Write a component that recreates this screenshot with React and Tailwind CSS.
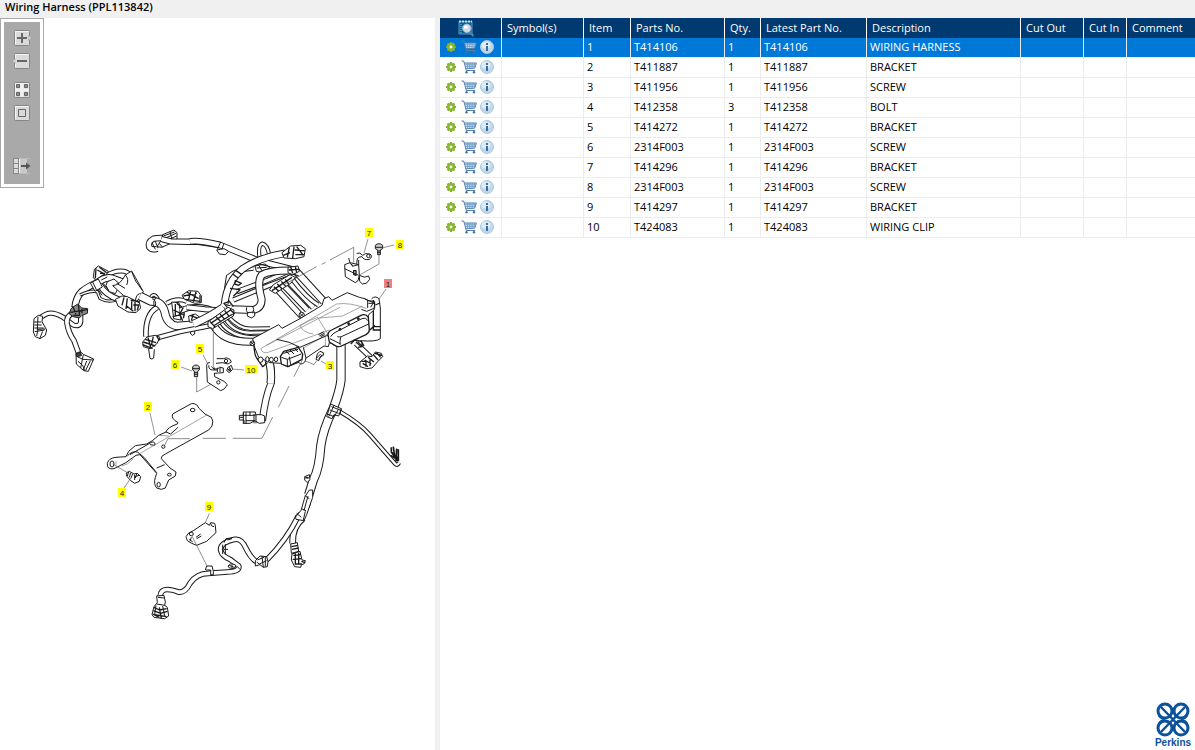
// src/pages/parts/App.jsx
import React, { useState } from 'react';

const title = 'Wiring Harness (PPL113842)';

const parts = [
  { item: 1, no: 'T414106', qty: 1, desc: 'WIRING HARNESS' },
  { item: 2, no: 'T411887', qty: 1, desc: 'BRACKET' },
  { item: 3, no: 'T411956', qty: 1, desc: 'SCREW' },
  { item: 4, no: 'T412358', qty: 3, desc: 'BOLT' },
  { item: 5, no: 'T414272', qty: 1, desc: 'BRACKET' },
  { item: 6, no: '2314F003', qty: 1, desc: 'SCREW' },
  { item: 7, no: 'T414296', qty: 1, desc: 'BRACKET' },
  { item: 8, no: '2314F003', qty: 1, desc: 'SCREW' },
  { item: 9, no: 'T414297', qty: 1, desc: 'BRACKET' },
  { item: 10, no: 'T424083', qty: 1, desc: 'WIRING CLIP' }
];

const callouts = [
  { n: 7, x: 369, y: 233 },
  { n: 8, x: 400, y: 245 },
  { n: 1, x: 388, y: 284 },
  { n: 5, x: 200, y: 349 },
  { n: 6, x: 175, y: 365 },
  { n: 10, x: 251, y: 370 },
  { n: 3, x: 330, y: 366 },
  { n: 2, x: 148, y: 407 },
  { n: 4, x: 122, y: 493 },
  { n: 9, x: 209, y: 507 }
];

const GearIcon = () => (
  <svg width="10" height="10" viewBox="0 0 10 10">
    <g stroke="#7fae27" strokeWidth="2">
      <path d="M5 0v10M0 5h10M1.500 1.500l7 7M8.500 1.500l-7 7" />
    </g>
    <circle cx="5" cy="5" r="2.700" fill="#fff" stroke="#86b72c" strokeWidth="2.600" />
  </svg>
);

const CartIcon = () => (
  <svg width="16" height="14" viewBox="0 0 16 14" fill="none">
    <path d="M4 3h11l-1.400 5H5.200z" fill="#cfe0f1" />
    <path d="M.5 1h2.200l2.600 9.500h8.900M3.400 3h12l-1.700 5.200-8.800.6" stroke="#527fae" />
    <path d="M6.500 3v5.500M8.800 3v5.300M11.100 3v5.200M13.300 3v5M4 4.700h10.800M4.600 6.500h9.600" stroke="#6f9cc8" strokeWidth=".8" />
    <circle cx="5.500" cy="12.300" r="1.200" fill="#44729f" />
    <circle cx="13" cy="12.300" r="1.200" fill="#44729f" />
  </svg>
);

const InfoIcon = () => (
  <svg width="14" height="14" viewBox="0 0 14 14">
    <circle cx="7" cy="7" r="6.500" fill="#c0d8ea" stroke="#a9c8df" />
    <ellipse cx="6" cy="5" rx="4.500" ry="3.600" fill="#deecf6" />
    <path d="M6 3h2v2H6zM6 6h2v5H6z" fill="#3f6c9b" />
  </svg>
);

const SearchIcon = () => (
  <svg width="17" height="17" viewBox="0 0 17 17" fill="none">
    <path d="M1 1.500h13V14H1z" fill="#0b5d93" stroke="#4f9fcf" />
    <path d="M1 1.500h13" stroke="#b9dff3" strokeWidth="2" strokeDasharray="2 1" />
    <path d="M3 4v9" stroke="#8fc4e4" strokeDasharray="1 1" />
    <path d="M11.500 12l4 4" stroke="#4389b8" strokeWidth="2.200" />
    <circle cx="8.800" cy="8.300" r="4.200" fill="#d3dde5" stroke="#a3b8c8" />
    <ellipse cx="7.800" cy="7" rx="2" ry="1.600" fill="#fff" />
  </svg>
);

const ToolButton = ({ label, className = '', children }) => (
  <button aria-label={label} className={`block h-4 w-5 ${className}`}>
    <svg width="20" height="16" viewBox="0 0 20 16" fill="none">
      {children}
    </svg>
  </button>
);

const Plate = () => (
  <>
    <rect x="2.500" y=".5" width="15" height="15" rx="1" fill="#dadada" stroke="#858585" />
    <path d="M3.500 14V1.500h13" stroke="#f4f4f4" />
  </>
);

const Toolbar = () => (
  <div className="w-11 border border-[#a9a9a9] p-[3px]">
    <div className="flex h-[162px] flex-col items-center bg-[#a9a9a9] pt-2">
      <ToolButton label="Zoom in">
        <Plate />
        <path d="M17 5.500l2.500 2.500-2.500 2.500z" fill="#eee" stroke="#858585" strokeWidth=".6" />
        <path d="M10 3v10M5 8h10" stroke="#666" strokeWidth="2" />
      </ToolButton>
      <ToolButton label="Zoom out" className="mt-[7px]">
        <Plate />
        <path d="M3 5.500L.5 8 3 10.500z" fill="#eee" stroke="#858585" strokeWidth=".6" />
        <path d="M5 8h10" stroke="#666" strokeWidth="2" />
      </ToolButton>
      <ToolButton label="Fit all" className="mt-[13px]">
        <Plate />
        <path d="M10 1v14M3 8h14" stroke="#f0f0f0" strokeWidth="3" />
        <path d="M4.500 2.500h3v3h-3zM12.500 2.500h3v3h-3zM4.500 10.500h3v3h-3zM12.500 10.500h3v3h-3z" fill="#8a8a8a" stroke="#666" />
      </ToolButton>
      <ToolButton label="Actual size" className="mt-[7px]">
        <Plate />
        <path d="M6.500 4.500h7v7h-7z" stroke="#666" />
      </ToolButton>
      <ToolButton label="Toggle list" className="mt-[37px]">
        <path d="M1.500.5h5v15h-5z" fill="#ddd" stroke="#858585" />
        <path d="M1 5.500h5M1 10.500h5" stroke="#858585" />
        <path d="M7 .5h8v15H7z" fill="#c9c9c9" />
        <path d="M7 .5h11M7 15.500h11" stroke="#bdbdbd" />
        <path d="M7.500 1v14" stroke="#f4f4f4" />
        <path d="M9 8h6" stroke="#555" strokeWidth="2" />
        <path d="M14 4.500L18.500 8 14 11.500z" fill="#555" />
      </ToolButton>
    </div>
  </div>
);

// a hose is a dark stroke with a thinner white one on top
const Tube = ({ d, w = 18 }) => (
  <>
    <path d={d} fill="none" stroke="#1a1a1a" strokeWidth={w + 3} />
    <path d={d} fill="none" stroke="#fff" strokeWidth={w - 3} />
  </>
);

// surface lines drawn over a part, never filled
const Lines = ({ d, w = 4 }) => <path d={d} fill="none" strokeWidth={w} />;

const LeftBranch = () => (
  <g transform="translate(20 220) scale(.33333)">
    <Tube d="M182 285L182 305Q180 322 160 315L130 292Q95 272 75 284L62 292" w={13} />
    <Tube d="M160 278Q138 288 141 310Q146 340 162 362L176 400" w={14} />
    <path d="M42 296L55 286 68 289 66 305 80 330 76 346 60 356 46 350 40 336z" />
    <Lines w={3} d="M42 306h22M43 315h22M43 324h28M44 335l30-5M50 348l4-20 22-1M60 354l8-20M54 290l-2 40" />
    <path d="M168 400l13-5 9 8 31 14-16 37-14-2-22-20z" />
    <Lines w={3} d="M172 410l16 8 32 2M190 450l10-27M197 451l14-29M174 424l14 12 6 16M190 404l-8 40" />
    <path d="M168 401l14-4 2 10-14 3z" fill="#444" />

    <Tube d="M165 262Q168 232 185 215Q205 198 235 187" w={19} />
    <Tube w={7} d="M180 225Q212 210 232 215L240 235Q265 250 292 238" />
    <path d="M153 266l20-14 12 12 18 2-1 14-16 6-8 8-18-4-12-8z" fill="#888" />
    <Lines d="M158 258l10 25M175 254l4 32M152 277l50-8M186 266v14M160 286h20" />
    <Tube d="M262 166Q285 150 312 154Q325 156 330 168" w={12} />
    <path d="M220 172l3-24 12-10 30 16-10 16-26 14z" />
    <Lines d="M228 145l-2 30M238 142l22 16M232 150l22 12-20 15M240 160h15" />
    <Tube d="M230 190Q260 165 285 178L318 190" w={20} />
    <Tube d="M240 195Q255 225 300 240" w={16} />
    <path d="M262 185l20-8 18 16-14 28-18 -6-10-18z" />
    <path d="M211 189l24-12 12 24-22 13z" />
    <Lines w={3} d="M244 180l18-9M234 208l12 18M250 190l16 22M218 186l12 25" />
    <path d="M278 197Q300 196 316 165L335 153 346 172 370 215 350 246 310 226z" />
    <Lines w={3} d="M335 155l12 28 20 28M316 165q12 12 4 30M366 222q-16-6-20 20M290 190l25 15" />
    <path d="M286 238l20-10 16 2 36 18 4 16-14 14-24-2-30-18z" />
    <Lines d="M312 232l-6 24M322 235l-4 32M332 240l28 6M335 244v26M345 246v28M320 258l20 16M340 255h16l-4 16" />

    <Tube d="M388 240Q400 210 415 238" w={8} />
    <Tube d="M412 262Q375 282 378 350" w={14} />
    <Tube d="M360 228L392 244Q425 242 434 275Q440 312 470 318L575 310" w={23} />
    <Lines w={3} d="M396 236q14 4 10 22M408 232q-10 10-6 26" />
    <Tube d="M440 250Q470 232 500 244" w={12} />
    <path d="M455 246l22 2 6 52-22-4z" />
    <Lines d="M470 250q30 15 20 45M460 270l30 14M480 284l8 18M458 290l26-6M466 252v36" />
    <path d="M486 226l20-14 28 2 10 14v20l-20 2-30-12z" />
    <Lines d="M490 228l40-8M500 216l36 20M496 238l44 6M512 214l-6 24M528 216l-8 30M540 226v22" />
    <path d="M506 288l20-6 14 10-10 16-22-2z" />
    <path d="M512 330v12q5 8 12 0v-14" />
    <Tube d="M480 272Q520 255 560 265L600 280" w={16} />
    <Lines d="M510 286l28 10M520 282l-6 20M490 262l-14 26" />
    <Tube d="M405 355L480 335 575 316" w={13} />
    <path d="M368 366l14-16 24-4 14 6-10 20-20 14-20-6z" />
    <Lines d="M370 366l36 12M376 358l32 10M384 352l8 30M400 350l-6 26M368 374l30 12" />
    <path d="M386 387l4 28q6 5 11-1l2-26" />
    <Lines d="M410 348l8 14" />
    <Tube d="M463 64L458 56Q420 52 400 56Q382 66 388 82Q396 92 412 86" w={16} />
    <path d="M424 60l4-16 34-14 9 8v20l-14 10-32 14-14-2z" />
    <Lines w={3} d="M430 48l34-12M432 56l36-16M434 64l36-16M396 68l10 20M406 64l8 20M418 70l10 12M450 34l8 34" />
    <Tube d="M600 75L530 65Q490 66 452 64L424 57" w={16} />
  </g>
);

const CentreHarness = () => (
  <g transform="translate(200 220) scale(.33333)">
    <Tube d="M-30 64Q0 60 60 75Q110 95 180 124L275 148" w={17} />
    <Lines w={3} d="M62 66l-10 22M72 70l-8 22" />
    <path d="M50 90l8 12 18 2 10-10-14-8z" />
    <Tube d="M180 120Q172 76 187 71Q205 74 210 120" w={10} />
    <Lines w={3} d="M165 138l30-6 14 10-20 16-20-4zM170 144l30-2M176 136l10 16" />
    <Tube d="M90 250Q70 255 85 170Q105 150 160 145" w={12} />
    <Tube d="M110 215L200 182 270 152" w={13} />
    <Tube d="M100 240L210 195 290 165" w={13} />
    <Tube d="M255 100Q180 112 130 145Q80 185 74 252" w={20} />
    <Lines d="M108 152l18 12M98 162l16 12M106 182l18 8-8 6-12-4zM90 205l30 4-20 20" />
    <path d="M246 98l26-20 30-2 14 10-4 24-26 6-34-2z" />
    <Lines d="M268 82l-6 30M282 80l-4 34M284 90l30 2M286 104h26M290 80l20 26M250 106l20-8" />

    <Tube d="M228 205L306 290" w={16} />
    <Tube d="M245 190L322 270" w={16} />
    <Tube d="M262 180L340 262" w={16} />
    <Tube d="M275 175Q320 235 355 255" w={12} />
    <Tube d="M285 150L372 245" w={21} />
    <path d="M208 210l12-16 50-30 16 8-14 18-46 30z" />
    <Lines d="M216 212l60-40M222 200l14 14M232 192l14 14M244 184l14 16M256 178l10 14" />
    <Tube d="M285 152Q210 150 185 165Q170 185 185 238Q185 265 160 270L95 268" w={21} />
    <path d="M264 142l30-4 4 16-20 10-14-6z" />
    <Lines d="M266 150l30-2M272 140l6 20M280 162l16 6M286 140l4 18" />
    <circle cx="305" cy="285" r="8" />
    <Lines w={3} d="M300 280l10 10M310 280l-10 10" />
    <path d="M142 278v10l12 6 10-6v-12z" />
    <Lines w={3} d="M140 262q-4 10 4 18M158 258q6 10 0 22" />

    <Tube d="M-40 262L15 268 75 272" w={15} />
    <Tube d="M-20 312Q30 290 70 262" w={22} />
    <Tube d="M85 290Q120 330 160 326L210 325" w={10} />
    <Tube d="M75 296Q105 342 160 338L200 337" w={10} />
    <Tube d="M62 305Q95 358 185 352" w={11} />
    <Tube d="M40 315Q70 370 165 365" w={21} />
    <path d="M24 306l60-44 18 8-2 18-62 38-14-6z" />
    <Lines d="M32 310l60-40M40 318l58-36M48 290l16 16M60 282l14 16M74 272l14 18M30 304l16 18M82 262l-10 -12 16-6 12 16M90 268l14 14" />

    {/* control unit */}
    <Tube d="M206 420Q216 450 212 490" w={22} />
    <path d="M515 236q10-10 22 0l4 28v92q-12 10-60 6" />
    <Lines d="M520 240v90M526 255l14-6M518 320h24M518 330h24M510 330l14-14" />
    <path d="M158 356L236 314 246 325 300 296 366 256 372 236 386 230 396 241 442 218 478 232 494 236 524 250 522 270 505 285 506 330 424 378 388 368 385 380 372 378 302 425 262 440 242 430 210 428 176 412 164 382z" />
    <g fill="none" stroke="#777" strokeWidth="2">
      <path d="M182 386L410 252Q450 246 500 266M182 386q4 14 20 12l186-68M298 318q30-18 55-26L385 345M300 318q10 20 40 24M358 294l70-6 60-30M376 352v28M310 384l76-44M200 376L420 262" />
    </g>
    <Lines w={3} d="M230 358q40 6 70 24L385 345M494 236l10 6 20 2v20l-24 10-16-6M505 250h20M503 240v24M512 262l8-14" />
    <path d="M385 350q-4-14 10-20l88-44q14-6 22 6l3 38q0 8-10 14l-74 34q-10 5-20-2l-16-10z" strokeWidth="4" />
    <Lines w={3} d="M392 350q6-10 16-14l78-40q14-4 16 6M390 356l32 16M424 350q-4 2-4 24M424 350l82-38M412 350q6 2 12 0" />
    <circle cx="420" cy="328" r="3" fill="#222" />
    <circle cx="446" cy="311" r="3" fill="#222" />
    <circle cx="475" cy="296" r="3" fill="#222" />
    <Lines w={3} d="M355 344l16-9M358 348l16-9M362 350l12-6M290 378l8 12" />
    <path d="M310 382l8 32q-2 18-16 18l-10-8" />
    <path d="M241 410l10-16 44-12 13 20-2 16-42 22-20-8z" strokeWidth="4" />
    <Lines w={3} d="M244 412l18 6 42-16M262 418v20M250 400l44-12M258 392l10 12M270 390l12 12M284 386l10 10M268 410l4 24" />
    <Lines d="M162 378q2 30 8 36l18 26 14-12" />
    <circle cx="157" cy="370" r="7" />
    <Lines w={3} d="M152 366l10 8M162 366l-10 8" />
    <ellipse cx="182" cy="419" rx="7" ry="8" />
    <ellipse cx="202" cy="418" rx="5" ry="8" />
    <ellipse cx="214" cy="419" rx="6" ry="7" />
    <ellipse cx="228" cy="418" rx="5" ry="7" />
    <Tube d="M468 370L512 412" w={14} />
    <Lines d="M452 372l12-12 20 4 8 14M468 366l16 14M486 368v12l-12 2" />
    <path d="M480 426l22-18 14 2 10-14 18 4 4 10-14 14-18 20-16 2-20-6z" />
    <Lines d="M488 430l16 10M494 420l20 12M504 412l18 14M520 404l14 16M530 398l12 14M484 424h14v16M510 414v24M524 400l22 6" />

    {/* upper bracket and screws */}
    <path d="M434 134l16-6 26 6 2 32-4 16-8 6-30-18z" />
    <Lines w={3} d="M450 128l-4-14M476 134v-14M434 146l42 20M450 130l10 8 16-4M454 132l4 8" />
    <Lines d="M461 152h7v14l-7-3z" />
    <path d="M470 100q10-4 18 6 6-8 22-4 10 8-2 16-16 4-22-8-10 0-14 6l-2 16" />
    <circle cx="505" cy="108" r="5" />
    <path d="M478 166q16 10 28 2l3 10q-8 16-22 14l-8-8z" />
    <path d="M526 76q10-10 22 0v10l-7 4v14h-8V90l-7-4z" fill="#ccc" />
    <Lines w={3} d="M526 82h22M533 93h8M533 98h8" />
    <g fill="none" stroke="#555" strokeWidth="2">
      <path d="M461 128V82L390 120M377 127l-12 6M350 140L255 192M537 104v28l-60 34" />
      <path d="M350 422l-8 12-28-12" />
    </g>
    <path d="M352 402l8-8 10 4v8l-8 4-6 12-8-4z" />
    <Lines w={3} d="M350 414l12-12M356 418l10-14" />
  </g>
);

const Brackets = () => (
  <g transform="translate(90 340) scale(.33333)">
    {/* small bracket with clip */}
    <path d="M370 -40V84M320 112v44l44-24" fill="none" stroke="#555" strokeWidth="2" />
    <path d="M350 76q0-10 10-8M350 76l2 50 40 26q12-2 20-18l-10-10-28-14-2-28" />
    <path d="M356 76q0 14 12 14h12l8-8 12 2v14l-28 2" />
    <Lines w={3} d="M364 80q10 12 20 4M382 84v12M390 84v12" />
    <path d="M380 56h20q8-6 20 2l4 8-10 6-16-4-20 2" />
    <circle cx="385" cy="127" r="5" />
    <circle cx="408" cy="63" r="5" />
    <path d="M414 82l10-6 4 12-10 10-8-6z" />
    <Lines d="M418 82l4 8M414 88l8 6" />
    <path d="M308 80q10-10 20 0v10l-5 4v16h-10V94l-5-4z" fill="#ccc" />
    <Lines w={3} d="M308 86h20M313 98h10M313 103h10" />

    {/* long bracket */}
    <path d="M72 386Q50 390 52 370Q56 354 78 352L108 350 116 334 136 317 170 312Q185 306 206 286L228 276Q232 262 262 252L264 248Q242 236 248 222L304 191Q312 188 322 196L326 204 345 222 364 232Q372 242 366 258L356 270 226 342Q212 348 214 356L240 384 258 396 256 408 236 420 226 444Q216 452 200 444Q190 432 196 412L200 400 150 344 138 346Q110 370 72 386z" />
    <Lines w={3} d="M112 348q14-16 30-12l20 16 38 46M120 344l66-38M228 276l14 6 22-20M186 306q12 0 8 10l-14-2M200 384l24-10" />
    <path d="M142 345L352 224M78 364v12M206 286l30 2M95 378q18-2 35-22" fill="none" stroke="#777" strokeWidth="2" />
    <ellipse cx="308" cy="210" rx="7" ry="5" />
    <ellipse cx="66" cy="372" rx="6" ry="9" />
    <ellipse cx="238" cy="404" rx="6" ry="4" />
    <ellipse cx="206" cy="434" rx="5" ry="7" />
    <circle cx="220" cy="320" r="5" />
    <path d="M110 398l8-4 14 8 10-2 10 10-4 14-14 6-12-8-12-14z" />
    <Lines w={3} d="M116 396l-4 12M122 398l-4 14M128 402l-6 14M134 404v16M134 410l14-4M140 402l-4 12" />
    <g fill="none" stroke="#555" strokeWidth="2">
      <path d="M68 372l44 26M102 444l18-26M222 320l12-24H300M338 295h70M442 295h-14M354 295h0M442 295h74l32-64M565 202l32-64M612 110l25-50" />
    </g>
  </g>
);

const LowerHarness = () => (
  <g transform="translate(230 360) scale(.33333)">
    <Tube d="M110 -14Q128 10 123 70Q106 110 97 182" w={19} />
    <path d="M28 166h12v-10h36v8h18l10 4v20l-16 2-14-8-14 8H42v-10H28z" />
    <Lines w={3} d="M40 158v34M48 158v34M72 162v28M78 164v26M40 166h36M48 182h26M28 172h14M60 156v10" />
    <Tube d="M328 154Q390 190 420 225L496 312Q502 318 507 308" w={10} />
    <path d="M482 262l12-4 8 8 5 0v54l-12 0-8-16z" stroke="none" fill="none" />
    <Lines w={5} d="M484 262v14l20 28M490 260l4 30M482 286l22 14M500 266l-2 38M505 268v36M486 278l18 16" />
    <Tube d="M333 -50V60Q330 90 310 145Q278 210 272 260Q268 325 250 360L236 405" w={25} />
    <path d="M302 132l32 14-8 22-14-4-6 12-16-6z" />
    <Lines w={3} d="M304 140l26 10M300 150l26 10M312 136l-16 34M326 146l-12 22M334 146l-4 16M292 162l20 8" />
    <path d="M224 350l14-6 2 14-8 10-8-8z" />
    <Lines w={5} d="M226 352l10 2" />
    <path d="M224 408l20 4-4 24-14 30-8 16" />
  </g>
);

const BottomHarness = () => (
  <g transform="translate(140 490) scale(.33333)">
    <Tube d="M490 84Q456 110 458 160" w={17} />
    <Tube d="M475 78Q440 150 380 210" w={14} />
    <path d="M508 0L495 20 483 62 466 78 468 88 492 92 500 74 518 22V0z" />
    <Lines w={3} d="M496 18l12 8M484 56l14 6M478 66l-12 16M496 64l-6 26M504 18l-12 44M470 70l14 12" />
    <path d="M452 162l20-4 4 26-22 6zM456 192l24-8 6 26 10 2-4 10-8 2-2 8-18-2-10-20z" />
    <Lines d="M454 170l20-4M456 178l20-4M460 196l22-2M458 208l26-2M466 190v30M476 188v34M464 222h22M484 214l12 4" />
    <Tube d="M382 208Q365 218 345 212Q330 200 318 175Q305 145 285 148Q240 158 242 180Q245 198 270 208L296 228Q300 245 262 246L205 250Q170 250 150 280Q135 310 115 306Q78 292 66 304Q58 312 62 330" w={14} />
    <path d="M346 212l14-14 20 2 4 14-2 16-12 2-10-8-14 4z" />
    <Lines w={3} d="M352 210l20-8M358 222l22-10M366 198l4 34M376 200v30M350 216l10 8" />
    <Lines w={3} d="M252 158l6-12 18-2M248 164v28M256 162v32M262 150l14-4M252 178h12" />
    <path d="M264 228l10-8 14 6-6 10-14-2z" />
    <Lines w={3} d="M276 222v12M290 228l10 10M268 226l14 6" />
    <path d="M196 240l4-12h16l4 16v10h-8v-14h-14" />
    <path d="M50 318l22-2 4 20-2 10 8 6 4 26-12 8-32-4-6-8 6-24 10-12z" />
    <Lines w={3} d="M54 322l18 2M50 342l24 4M68 348l6 30M48 346l-4 28" />
    <Lines d="M42 352l16 8 22-4M40 362l22 8 20-6M44 374l36 6M58 352l6 34M38 372l20 10" />
    <path d="M138 140Q142 128 160 122L196 98 208 106 212 98 224 100 226 108 228 128 200 154 170 166Q152 160 142 152z" />
    <Lines w={3} d="M148 148l10 8M150 154l4-12M168 142l14-10M170 146l14-8M212 100q0 10 10 10" />
    <ellipse cx="154" cy="132" rx="6" ry="5" />
    <path d="M156 138l46 92M208 70l-12 28" fill="none" stroke="#555" strokeWidth="2" />
  </g>
);

const PartsDrawing = ({ selected, onSelect }) => (
  <svg className="block w-full" viewBox="0 188 435 562">
    <g fill="#fff" stroke="#1a1a1a" strokeWidth="3" strokeLinejoin="round">
      <LowerHarness />
      <LeftBranch />
      <CentreHarness />
      <Brackets />
      <BottomHarness />
    </g>
    <path
      d="M368 239l-4 14M382 248l12-3M386 289l-7 10M203 355l5 9M181 367l11 4M232 369l12 1M326 364l-5-3M150 413l5 22"
      stroke="#666"
      strokeWidth=".7"
    />
    <g fontFamily="'Liberation Sans', Arial, sans-serif" fontSize="8" textAnchor="middle">
      {callouts.map((c) => (
        <g key={c.n} onClick={() => onSelect(c.n)}>
          <rect
            x={c.n > 9 ? c.x - 6 : c.x - 4}
            y={c.y - 5}
            width={c.n > 9 ? 12 : 8}
            height="9"
            fill={c.n === selected ? '#f08080' : '#ff0'}
          />
          <text x={c.x} y={c.y + 3} fill="#222">{c.n}</text>
        </g>
      ))}
    </g>
  </svg>
);

const Logo = () => (
  <div className="mt-auto mr-[2px] flex w-10 flex-col items-center self-end pb-px">
    <svg width="34" height="35" viewBox="0 0 34 35" fill="none" stroke="#0b519c" strokeWidth="3">
      <circle cx="9" cy="9" r="7" />
      <circle cx="25" cy="9" r="7" />
      <circle cx="9" cy="26" r="7" />
      <circle cx="25" cy="26" r="7" />
      <path d="M5 5l24 25M29 5L5 30" strokeWidth="2.500" />
      <path d="M2.500 13Q5 17 9 17.500Q5 18 2.500 22M31.500 13Q29 17 25 17.500Q29 18 31.500 22" strokeWidth="2" />
    </svg>
    <span className="font-['Liberation_Sans',Arial,sans-serif] text-[10px] leading-[12px] font-bold text-[#0b519c]">Perkins</span>
  </div>
);

const th = 'border-r border-white p-0 pb-[2px] pl-[5px] text-left font-normal whitespace-nowrap';
const td = 'border-r border-b border-[#ececec] p-0 pb-[2px] pl-[3px] whitespace-nowrap';

const App = () => {
  const [selected, setSelected] = useState(1);

  return (
    <div className="flex h-screen flex-col overflow-hidden bg-white font-['Open_Sans','Noto_Sans',sans-serif] text-[11px] text-black">
      <h1 className="h-[18px] shrink-0 bg-[#f0f0f0] pl-[5px] text-[11px] leading-[14px] font-semibold">{title}</h1>
      <div className="flex min-h-0 flex-1">
        <section className="w-[435px] shrink-0">
          <Toolbar />
          <PartsDrawing selected={selected} onSelect={setSelected} />
        </section>
        <div className="w-[5px] shrink-0 bg-[#f0f0f0]" />
        <section className="flex min-w-0 flex-1 flex-col">
          <table className="w-full table-fixed border-separate border-spacing-0">
            <colgroup>
              <col className="w-[62px]" />
              <col className="w-[82px]" />
              <col className="w-[47px]" />
              <col className="w-[94px]" />
              <col className="w-[36px]" />
              <col className="w-[106px]" />
              <col className="w-[154px]" />
              <col className="w-[63px]" />
              <col className="w-[43px]" />
              <col />
            </colgroup>
            <thead>
              <tr className="h-5 bg-[#003a70] leading-[17px] text-white">
                <th className="border-r border-white p-0 pl-[18px]">
                  <button aria-label="Search" className="block"><SearchIcon /></button>
                </th>
                <th className={th}>Symbol(s)</th>
                <th className={th}>Item</th>
                <th className={th}>Parts No.</th>
                <th className={th}>Qty.</th>
                <th className={th}>Latest Part No.</th>
                <th className={th}>Description</th>
                <th className={th}>Cut Out</th>
                <th className={th}>Cut In</th>
                <th className="p-0 pb-[2px] pl-[5px] text-left font-normal">Comment</th>
              </tr>
            </thead>
            <tbody>
              {parts.map((p) => (
                <tr
                  key={p.item}
                  onClick={() => setSelected(p.item)}
                  className={p.item === selected ? 'h-5 bg-[#0078d7] leading-[17px] text-white' : 'h-5 leading-[17px]'}
                >
                  <td className={td}>
                    <div className="flex items-center gap-[3px] pl-[3px]">
                      <button aria-label="Options" className="pr-[2px]"><GearIcon /></button>
                      <button aria-label="Add to cart"><CartIcon /></button>
                      <button aria-label="Part information"><InfoIcon /></button>
                    </div>
                  </td>
                  <td className={td} />
                  <td className={td}>{p.item}</td>
                  <td className={td}>{p.no}</td>
                  <td className={td}>{p.qty}</td>
                  <td className={td}>{p.no}</td>
                  <td className={td}>{p.desc}</td>
                  <td className={td} />
                  <td className={td} />
                  <td className="border-b border-[#ececec]" />
                </tr>
              ))}
            </tbody>
          </table>
          <Logo />
        </section>
      </div>
    </div>
  );
};

export default App;
